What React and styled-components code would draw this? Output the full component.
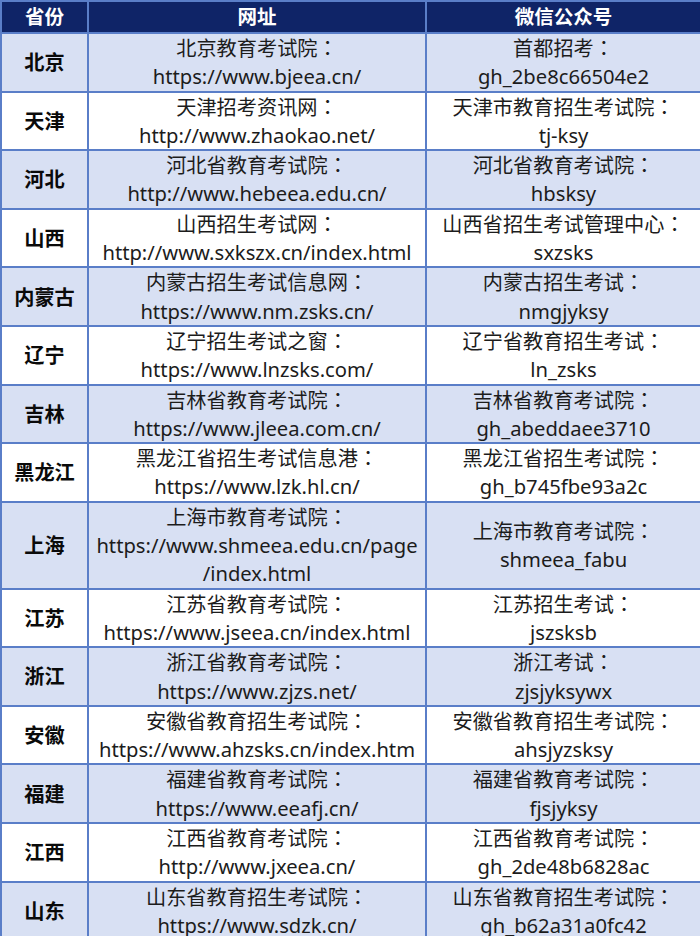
import React from "react";
import styled, { createGlobalStyle } from "styled-components";

const Global = createGlobalStyle`
  html, body {
    margin: 0;
    padding: 0;
    background: #ffffff;
  }
  body {
    font-family: "Noto Sans", "Noto Sans CJK SC", sans-serif;
  }
`;

const Table = styled.table`
  width: 700px;
  border-collapse: collapse;
  table-layout: fixed;
  font-size: 20.2px;
  color: #1c1c1c;
`;

const HeadCell = styled.th`
  background: #0f2467;
  color: #ffffff;
  font-weight: 700;
  font-size: 19.5px;
  line-height: 28px;
  padding: 1px 0;
  border: 2px solid #5a7ec8;
  text-align: center;
`;

const Row = styled.tr`
  background: ${(p) => (p.$shaded ? "#d8e0f3" : "#ffffff")};
`;

const Cell = styled.td`
  border: 2px solid #5a7ec8;
  text-align: center;
  vertical-align: middle;
  line-height: 28.3px;
  padding: 0;
  white-space: nowrap;
  font-weight: ${(p) => (p.$bold ? 700 : 400)};
  color: ${(p) => (p.$bold ? "#0a0a0a" : "#1c1c1c")};
`;

// fullwidth colon centred in its box, as in the original
const Colon = styled.span`
  font-family: "Noto Sans CJK JP", "Noto Sans CJK SC", sans-serif;
`;

const rows = [
  ["北京", ["北京教育考试院：", "https://www.bjeea.cn/"], ["首都招考：", "gh_2be8c66504e2"]],
  ["天津", ["天津招考资讯网：", "http://www.zhaokao.net/"], ["天津市教育招生考试院：", "tj-ksy"]],
  ["河北", ["河北省教育考试院：", "http://www.hebeea.edu.cn/"], ["河北省教育考试院：", "hbsksy"]],
  ["山西", ["山西招生考试网：", "http://www.sxkszx.cn/index.html"], ["山西省招生考试管理中心：", "sxzsks"]],
  ["内蒙古", ["内蒙古招生考试信息网：", "https://www.nm.zsks.cn/"], ["内蒙古招生考试：", "nmgjyksy"]],
  ["辽宁", ["辽宁招生考试之窗：", "https://www.lnzsks.com/"], ["辽宁省教育招生考试：", "ln_zsks"]],
  ["吉林", ["吉林省教育考试院：", "https://www.jleea.com.cn/"], ["吉林省教育考试院：", "gh_abeddaee3710"]],
  ["黑龙江", ["黑龙江省招生考试信息港：", "https://www.lzk.hl.cn/"], ["黑龙江省招生考试院：", "gh_b745fbe93a2c"]],
  ["上海", ["上海市教育考试院：", "https://www.shmeea.edu.cn/page", "/index.html"], ["上海市教育考试院：", "shmeea_fabu"]],
  ["江苏", ["江苏省教育考试院：", "https://www.jseea.cn/index.html"], ["江苏招生考试：", "jszsksb"]],
  ["浙江", ["浙江省教育考试院：", "https://www.zjzs.net/"], ["浙江考试：", "zjsjyksywx"]],
  ["安徽", ["安徽省教育招生考试院：", "https://www.ahzsks.cn/index.htm"], ["安徽省教育招生考试院：", "ahsjyzsksy"]],
  ["福建", ["福建省教育考试院：", "https://www.eeafj.cn/"], ["福建省教育考试院：", "fjsjyksy"]],
  ["江西", ["江西省教育考试院：", "http://www.jxeea.cn/"], ["江西省教育考试院：", "gh_2de48b6828ac"]],
  ["山东", ["山东省教育招生考试院：", "https://www.sdzk.cn/"], ["山东省教育招生考试院：", "gh_b62a31a0fc42"]],
];

const Text = ({ value }) =>
  value.endsWith("：") ? (
    <>
      {value.slice(0, -1)}
      <Colon>：</Colon>
    </>
  ) : (
    value
  );

const Lines = ({ items }) =>
  items.map((t, i) => (
    <React.Fragment key={i}>
      {i > 0 && <br />}
      <Text value={t} />
    </React.Fragment>
  ));

export default function App() {
  return (
    <>
      <Global />
      <Table>
        <colgroup>
          <col style={{ width: 87 }} />
          <col style={{ width: 338 }} />
          <col style={{ width: 275 }} />
        </colgroup>
        <thead>
          <tr>
            <HeadCell>省份</HeadCell>
            <HeadCell>网址</HeadCell>
            <HeadCell>微信公众号</HeadCell>
          </tr>
        </thead>
        <tbody>
          {rows.map(([prov, site, wx], i) => (
            <Row key={prov} $shaded={i % 2 === 0}>
              <Cell $bold>{prov}</Cell>
              <Cell>
                <Lines items={site} />
              </Cell>
              <Cell>
                <Lines items={wx} />
              </Cell>
            </Row>
          ))}
        </tbody>
      </Table>
    </>
  );
}
